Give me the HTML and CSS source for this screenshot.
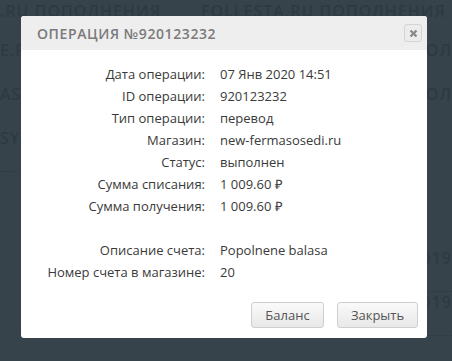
FILE: index.html
```html
<!DOCTYPE html>
<html lang="ru">

<head>
    <meta charset="UTF-8">
    <title>Операция</title>
    <link rel="stylesheet" href="styles.css">
</head>

<body>
    <div class="page">
        <div class="bg-row top">
            <span>.RU ПОПОЛНЕНИЯ</span>
            <span class="bg-b">FOLLESTA.RU ПОПОЛНЕНИЯ</span>
        </div>
        <div class="bg-row">
            <span>E.RU</span>
            <span>ПОЛ</span>
        </div>
        <div class="bg-row">
            <span>AS</span>
            <span>ПОЛ</span>
        </div>
        <div class="bg-row">
            <span class="dotted">SY</span>
        </div>
        <div class="bg-row gap"></div>
        <div class="bg-row">
            <span></span>
            <span class="dotted">2019</span>
        </div>
        <div class="bg-row">
            <span></span>
            <span class="dotted">2019</span>
        </div>
    </div>

    <div class="modal">
        <div class="modal-head">
            <h3>Операция №920123232</h3>
            <span class="close">
                <svg width="9" height="9" viewBox="0 0 9 9">
                    <path d="M1.5 1.5 L7.5 7.5 M7.5 1.5 L1.5 7.5" stroke="#8a8a8a" stroke-width="2.4" />
                </svg>
            </span>
        </div>
        <div class="modal-body">
            <div class="lbl">Дата операции:</div>
            <div class="val">07 Янв 2020 14:51</div>
            <div class="lbl">ID операции:</div>
            <div class="val">920123232</div>
            <div class="lbl">Тип операции:</div>
            <div class="val">перевод</div>
            <div class="lbl">Магазин:</div>
            <div class="val">new-fermasosedi.ru</div>
            <div class="lbl">Статус:</div>
            <div class="val">выполнен</div>
            <div class="lbl">Сумма списания:</div>
            <div class="val">1 009.60 ₽</div>
            <div class="lbl">Сумма получения:</div>
            <div class="val">1 009.60 ₽</div>
            <div class="lbl"></div>
            <div class="val"></div>
            <div class="lbl">Описание счета:</div>
            <div class="val">Popolnene balasa</div>
            <div class="lbl">Номер счета в магазине:</div>
            <div class="val">20</div>
        </div>
        <div class="modal-foot">
            <button class="btn">Баланс</button>
            <button class="btn">Закрыть</button>
        </div>
    </div>
</body>

</html>
```

FILE: styles.css
```css
* {
    margin: 0;
    padding: 0;
    box-sizing: border-box;
}

body {
    background: #36434b;
    font-family: "Open Sans", "Liberation Sans", sans-serif;
    height: 361px;
    overflow: hidden;
}

/* затемненная страница под окном */
.page {
    color: #2e3a41;
    font-size: 16px;
    font-weight: 600;
    letter-spacing: 1px;
    white-space: nowrap;
}

.bg-row {
    display: flex;
    justify-content: space-between;
    height: 44px;
    line-height: 20px;
    overflow: hidden;
}

.bg-row.top {
    justify-content: flex-start;
    height: 40px;
    padding-top: 1px;
}

.bg-row.gap {
    height: 76px;
}

.bg-b {
    margin-left: 40px;
}

.dotted {
    border-bottom: 1px dotted #2e3a41;
}

.modal {
    position: absolute;
    left: 21px;
    top: 16px;
    width: 406px;
    background: #fff;
    border-radius: 3px;
    overflow: hidden;
}

.modal-head {
    height: 34px;
    background: #eeeeee;
    display: flex;
    align-items: center;
    justify-content: space-between;
    padding: 0 5px 0 16px;
}

.modal-head h3 {
    font-size: 14px;
    font-weight: 600;
    color: #7a7a7a;
    text-transform: uppercase;
    letter-spacing: 0.6px;
}

.close {
    width: 18px;
    height: 18px;
    border: 1px solid #d4d4d4;
    border-radius: 3px;
    background: #ececec;
    display: flex;
    align-items: center;
    justify-content: center;
}

.modal-body {
    display: grid;
    grid-template-columns: 184px 1fr;
    column-gap: 15px;
    grid-auto-rows: 22px;
    padding-top: 13px;
    font-size: 13px;
    color: #3a3a3a;
    line-height: 22px;
}

.lbl {
    text-align: right;
}

.modal-foot {
    display: flex;
    justify-content: flex-end;
    gap: 13px;
    padding: 19px 9px 10px 0;
}

.btn {
    height: 26px;
    padding: 0 12px;
    font-family: "Open Sans", sans-serif;
    font-size: 13px;
    color: #555;
    border: 1px solid #cfcfcf;
    border-radius: 3px;
    background: linear-gradient(#fafafa, #e8e8e8);
}

.btn:first-child {
    width: 73px;
}

.btn:last-child {
    width: 81px;
}
```
